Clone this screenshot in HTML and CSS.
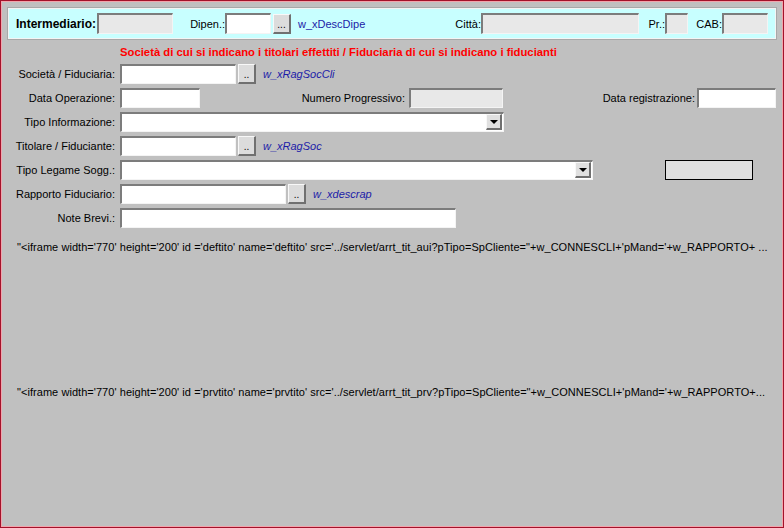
FILE: index.html
```html
<!DOCTYPE html>
<html>
<head>
<meta charset="utf-8">
<link rel="stylesheet" href="styles.css">
</head>
<body>
<div class="page">
  <div class="header">
    <span class="hlabel">Intermediario:</span>
    <span class="field ro w76"></span>
    <span class="lab w52">Dipen.:</span>
    <span class="field w46"></span>
    <span class="btn">...</span>
    <span class="desc plain hdesc">w_xDescDipe</span>
    <span class="lab w23">Città:</span>
    <span class="field ro w158"></span>
    <span class="lab w26">Pr.:</span>
    <span class="field ro w23"></span>
    <span class="lab w34">CAB:</span>
    <span class="field ro w46"></span>
  </div>

  <div class="title">Società di cui si indicano i titolari effettiti / Fiduciaria di cui si indicano i fiducianti</div>

  <div class="form">
    <div class="row">
      <span class="lab rl">Società / Fiduciaria:</span>
      <span class="field w116"></span>
      <span class="btn">..</span>
      <span class="desc">w_xRagSocCli</span>
    </div>
    <div class="row">
      <span class="lab rl">Data Operazione:</span>
      <span class="field w80"></span>
      <span class="lab w205">Numero Progressivo:</span>
      <span class="field ro w94 ml4"></span>
      <span class="lab w192">Data registrazione:</span>
      <span class="field w79 ml2"></span>
    </div>
    <div class="row">
      <span class="lab rl">Tipo Informazione:</span>
      <span class="field select w384"><span class="arrow"></span></span>
    </div>
    <div class="row">
      <span class="lab rl">Titolare / Fiduciante:</span>
      <span class="field w116"></span>
      <span class="btn">..</span>
      <span class="desc">w_xRagSoc</span>
    </div>
    <div class="row">
      <span class="lab rl">Tipo Legame Sogg.:</span>
      <span class="field select w473"><span class="arrow"></span></span>
      <span class="box"></span>
    </div>
    <div class="row">
      <span class="lab rl">Rapporto Fiduciario:</span>
      <span class="field w166"></span>
      <span class="btn">..</span>
      <span class="desc">w_xdescrap</span>
    </div>
    <div class="row">
      <span class="lab rl">Note Brevi.:</span>
      <span class="field w336"></span>
    </div>
  </div>

  <div class="frame first">"&lt;iframe width='770' height='200' id ='deftito' name='deftito' src='../servlet/arrt_tit_aui?pTipo=SpCliente="+w_CONNESCLI+'pMand='+w_RAPPORTO+ ...</div>
  <div class="frame">"&lt;iframe width='770' height='200' id ='prvtito' name='prvtito' src='../servlet/arrt_tit_prv?pTipo=SpCliente="+w_CONNESCLI+'pMand='+w_RAPPORTO+...</div>
</div>
</body>
</html>
```

FILE: styles.css
```css
html, body {
  margin: 0;
  padding: 0;
}
body {
  font-family: "Liberation Sans", Arial, sans-serif;
  font-size: 11px;
  color: #000;
}
.page {
  box-sizing: border-box;
  width: 784px;
  height: 528px;
  background: #c0c0c0;
  border: 1px solid #a3122a;
  box-shadow: inset 0 0 0 1px #f2a4ac;
  padding: 1px;
  overflow: hidden;
}
.header {
  box-sizing: border-box;
  margin: 6px 0 0 6px;
  width: 768px;
  height: 31px;
  background: #c8ffff;
  border: 1px solid #f4f4f4;
  outline: 1px solid #a8a8a8;
  display: flex;
  align-items: center;
  padding-left: 7px;
}
.hlabel {
  font-weight: bold;
  font-size: 12px;
  width: 81px;
  flex-shrink: 0;
  white-space: nowrap;
}
.header .field {
  height: 21px;
}
.lab {
  display: flex;
  justify-content: flex-end;
  white-space: nowrap;
  flex-shrink: 0;
}
.rl {
  width: 113px;
  margin-right: 5px;
}
.field {
  box-sizing: border-box;
  display: block;
  flex-shrink: 0;
  height: 20px;
  background: #fff;
  border-style: solid;
  border-width: 2px 1px 1px 2px;
  border-color: #7c7c7c #f4f4f4 #f4f4f4 #7c7c7c;
  position: relative;
}
.field.ro {
  background: #e8e8e8;
}
.btn {
  box-sizing: border-box;
  flex-shrink: 0;
  width: 18px;
  height: 20px;
  margin-left: 2px;
  background: #dcdcdc;
  border-style: solid;
  border-width: 1px 2px 2px 1px;
  border-color: #f8f8f8 #707070 #707070 #f8f8f8;
  display: flex;
  align-items: flex-end;
  justify-content: center;
  font-size: 10px;
  line-height: 14px;
  color: #000;
}
.desc {
  margin-left: 7px;
  color: #1c1ca8;
  font-style: italic;
  white-space: nowrap;
  flex-shrink: 0;
}
.desc.plain {
  font-style: normal;
}
.hdesc { width: 160px; }
.w23 { width: 23px; }
.w26 { width: 26px; }
.w34 { width: 34px; }
.w46 { width: 46px; }
.w52 { width: 52px; }
.w76 { width: 76px; }
.w79 { width: 79px; }
.w80 { width: 80px; }
.w94 { width: 94px; }
.w116 { width: 116px; }
.w158 { width: 158px; }
.w166 { width: 166px; }
.w192 { width: 192px; }
.w205 { width: 205px; }
.w336 { width: 336px; }
.w384 { width: 384px; }
.w473 { width: 473px; }
.ml2 { margin-left: 2px; }
.ml4 { margin-left: 4px; }

.title {
  margin-top: 6px;
  padding-left: 118px;
  height: 14px;
  line-height: 14px;
  color: #f00;
  font-weight: bold;
  font-size: 11.3px;
  white-space: nowrap;
}
.form {
  margin-top: 5px;
  display: flex;
  flex-direction: column;
  gap: 4px;
}
.row {
  display: flex;
  align-items: center;
  height: 20px;
}
.select .arrow {
  position: absolute;
  right: 1px;
  top: 0;
  width: 16px;
  height: 16px;
  box-sizing: border-box;
  background: #e0e0e0;
  border-style: solid;
  border-width: 1px 2px 2px 1px;
  border-color: #f8f8f8 #707070 #707070 #f8f8f8;
}
.select .arrow::after {
  content: "";
  position: absolute;
  left: 3px;
  top: 5px;
  border-left: 4px solid transparent;
  border-right: 4px solid transparent;
  border-top: 4px solid #000;
}
.box {
  box-sizing: border-box;
  width: 88px;
  height: 20px;
  margin-left: 72px;
  background: #e0e0e0;
  border: 1px solid #000;
  flex-shrink: 0;
}
.frame {
  padding-left: 15px;
  height: 145px;
  line-height: 14px;
  white-space: nowrap;
  letter-spacing: 0.05px;
}
.frame.first {
  margin-top: 12px;
}
```
